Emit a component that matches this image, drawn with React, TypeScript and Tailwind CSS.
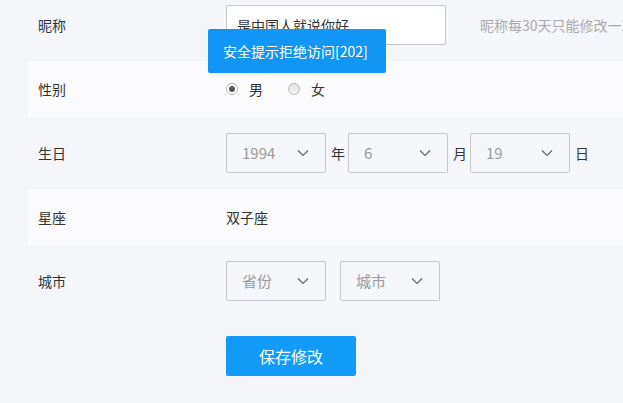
import React from "react";

const font = { fontFamily: '"Noto Sans CJK SC", "Noto Sans", sans-serif' };

function Chevron() {
  return (
    <svg width="12" height="8" viewBox="0 0 12 8" className="shrink-0">
      <path d="M1 1.5 L6 6.5 L11 1.5" fill="none" stroke="#666" strokeWidth="1.2" />
    </svg>
  );
}

function Select({ value }: { value: string }) {
  return (
    <div className="w-[100px] h-10 border border-[#c6c8cc] rounded-[2px] flex items-center justify-between pl-[15px] pr-[16px] text-[15px] text-[#9a9a9a]">
      <span>{value}</span>
      <Chevron />
    </div>
  );
}

function Radio({ checked, label }: { checked?: boolean; label: string }) {
  return (
    <label className="flex items-center gap-[11px]">
      <span
        className={`w-3 h-3 rounded-full border border-[#b8b8b8] flex items-center justify-center ${
          checked ? "bg-white" : "bg-gradient-to-b from-[#e2e2e2] to-[#f4f4f4]"
        }`}
      >
        {checked && <span className="w-[6px] h-[6px] rounded-full bg-[#555]" />}
      </span>
      <span className="text-[14px] text-[#333]">{label}</span>
    </label>
  );
}

function Unit({ children }: { children: React.ReactNode }) {
  return <span className="ml-[5px] mr-[3px] text-[14px] text-[#333]">{children}</span>;
}

function Row({
  label,
  band,
  children,
}: {
  label: string;
  band?: boolean;
  children: React.ReactNode;
}) {
  return (
    <div className="h-16 py-1">
      <div className={`h-full flex items-center ${band ? "bg-[#fbfbfd]" : ""}`}>
        <div className="w-[198px] pl-[10px] text-[14px] text-[#333] shrink-0">{label}</div>
        <div className="flex items-center">{children}</div>
      </div>
    </div>
  );
}

export default function App() {
  return (
    <div className="relative w-[623px] h-[403px] overflow-hidden bg-[#f4f6f9]" style={font}>
      <div className="-mt-[7px] pl-[28px]">
        <Row label="昵称">
          <div className="w-[220px] h-10 bg-white border border-[#c6c8cc] rounded-[2px] flex items-center px-[10px] text-[14px] text-[#333]">
            是中国人就说你好
          </div>
          <span className="ml-[34px] text-[14px] text-[#aaa] whitespace-nowrap">
            昵称每30天只能修改一次
          </span>
        </Row>
        <Row label="性别" band>
          <div className="flex items-center gap-[25px]">
            <Radio checked label="男" />
            <Radio label="女" />
          </div>
        </Row>
        <Row label="生日">
          <Select value="1994" />
          <Unit>年</Unit>
          <Select value="6" />
          <Unit>月</Unit>
          <Select value="19" />
          <Unit>日</Unit>
        </Row>
        <Row label="星座" band>
          <span className="text-[14px] text-[#333]">双子座</span>
        </Row>
        <Row label="城市">
          <div className="flex items-center gap-[14px]">
            <Select value="省份" />
            <Select value="城市" />
          </div>
        </Row>
        <div className="mt-[23px] pl-[198px]">
          <button className="w-[130px] h-10 bg-[#139bfa] rounded-[2px] text-white text-[16px]">
            保存修改
          </button>
        </div>
      </div>

      <div className="absolute left-[208px] top-[29px] w-[178px] h-[44px] bg-[#1296f5] rounded-[2px] flex items-center pl-[15px] text-white text-[14px]">
        安全提示拒绝访问[202]
      </div>
    </div>
  );
}
